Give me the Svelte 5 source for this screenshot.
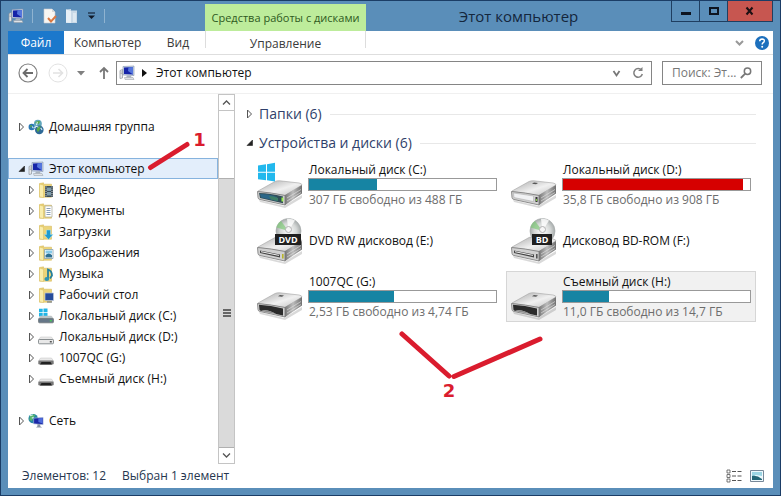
<script>
  const folders = [
    { name: 'Видео', kind: 'video' },
    { name: 'Документы', kind: 'docs' },
    { name: 'Загрузки', kind: 'down' },
    { name: 'Изображения', kind: 'pics' },
    { name: 'Музыка', kind: 'music' },
    { name: 'Рабочий стол', kind: 'desk' },
    { name: 'Локальный диск (C:)', kind: 'win' },
    { name: 'Локальный диск (D:)', kind: 'hdd' },
    { name: '1007QC (G:)', kind: 'usb' },
    { name: 'Съемный диск (H:)', kind: 'usb' }
  ];
  const drives = [
    { name: 'Локальный диск (C:)', kind: 'win', used: 36.6, info: '307 ГБ свободно из 488 ГБ' },
    { name: 'Локальный диск (D:)', kind: 'hdd', used: 96.2, full: true, info: '35,8 ГБ свободно из 908 ГБ' },
    { name: 'DVD RW дисковод (E:)', kind: 'dvd', badge: 'DVD' },
    { name: 'Дисковод BD-ROM (F:)', kind: 'bd', badge: 'BD' },
    { name: '1007QC (G:)', kind: 'usb', used: 45.5, info: '2,53 ГБ свободно из 4,74 ГБ' },
    { name: 'Съемный диск (H:)', kind: 'usb', used: 24.8, hover: true, info: '11,0 ГБ свободно из 14,7 ГБ' }
  ];
</script>

{#snippet computer()}
  <svg width="16" height="16" viewBox="0 0 16 16" aria-hidden="true">
    <path d="M1 5.5 3.5 4.5V13L1 13.5z" fill="#e8eaec" stroke="#8d949b" stroke-width=".7" />
    <path d="M1.6 7h1.2M1.6 8.6h1.2" stroke="#777" stroke-width=".6" />
    <path d="M4 1.5 15 1v9.5L4 10z" fill="#c9d4e6" stroke="#8090ad" stroke-width=".6" />
    <path d="M5 2.4 14 2v7.4L5 9z" fill="#1524a8" />
    <path d="M9.5 2.2 14 2v7.4L9 6z" fill="#5576dd" />
    <path d="M8 10.5h4l.5 2H7z" fill="#a9b3bf" />
    <path d="M5.5 12.5h8.5l1 2H6z" fill="#dfe3e7" stroke="#9299a1" stroke-width=".5" />
  </svg>
{/snippet}

{#snippet homegroup()}
  <svg width="16" height="16" viewBox="0 0 17 16" aria-hidden="true">
    <circle cx="4" cy="8" r="3.4" fill="#2a78b4" />
    <circle cx="10.5" cy="4.5" r="4.2" fill="#62a7bd" />
    <circle cx="12" cy="11" r="4.6" fill="#2f6a98" />
    <path d="M7.5 3.5Q10 .5 13 2.2L11 5zM9 10q2-3.5 4.500-2.500L12.500 11l-2 2.500zM2 6.500 4.500 6 3 9z" fill="#58aa45" />
    <path d="M10 2.500 9 6M13.500 9l1.500 2M4.500 7.500l1 1.500" stroke="#d5eff3" stroke-width="1.200" />
    <path d="M6 9q2-3 5-1" fill="none" stroke="#e9f4f5" stroke-width="1" />
  </svg>
{/snippet}

{#snippet network()}
  <svg width="16" height="16" viewBox="0 0 17 16" aria-hidden="true">
    <circle cx="5.500" cy="5.500" r="5" fill="#2686a5" />
    <path d="M2 3q3-3 6-1.500L6 4 4 8 1.500 7z" fill="#57b56b" />
    <path d="M2 2.500 5 1.500M4 5l2-1" stroke="#d2f0e9" stroke-width="1.200" />
    <path d="m6 5 10-.8v7.600L6 11z" fill="#1a27a7" stroke="#a6b5d8" stroke-width=".7" />
    <path d="m11 5 4.500-.3v6L11 9z" fill="#4e6cdc" />
    <path d="M10 11.500h3v2l2 1.500H8.500l1.500-1.500z" fill="#8993a5" />
  </svg>
{/snippet}

{#snippet smallIcon(kind)}
  <svg width="16" height="16" viewBox="0 0 16 16" aria-hidden="true">
    {#if kind === 'win' || kind === 'hdd' || kind === 'usb'}
      {#if kind === 'win'}
        <path d="M1 .800h3.700v3.400H1zM5.500.500h4v3.700h-4zM1 5h3.700v3.400H1zM5.500 5h4v3.700h-4z" fill="#20b4e6" />
      {/if}
      <path d="M2.500 8h11L15.500 11H.500z" fill={kind === 'win' ? '#b9c3c7' : '#e9e9e9'} stroke="#c0c0c0" stroke-width=".5" />
      {#if kind === 'usb'}
        <rect x=".3" y="10.500" width="15.400" height="4" rx="1.200" fill="#777" />
        <path d="M2 14.500 3.500 12h9l1.500 2.500z" fill="#222" />
      {:else}
        <rect x=".5" y="10.500" width="15" height="4.300" rx="1" fill={kind === 'win' ? '#678' : '#e8e8e8'} stroke="#70777a" stroke-width=".8" />
        <rect x="11.800" y="12" width="2" height="1.500" fill={kind === 'win' ? '#49c65a' : '#555'} />
      {/if}
    {:else}
      <path d="M1.500 1.500 5.500.800v1.400h8v13h-12z" fill="#ecd478" stroke="#d0b350" stroke-width=".5" />
      <path d="m1.500 2 4 1.200v12.500l-4-1z" fill="#f9edac" stroke="#d8bd62" stroke-width=".5" />
      {#if kind === 'video'}
        <path d="M7 4h8v11H7z" fill="#3c4c57" /><path d="M9 5.500h4v3.500H9zM9 10h4v3.500H9z" fill="#7d9cab" />
        <path d="M8 4.500v10M14 4.500v10" stroke="#e8e8e8" stroke-dasharray="1 1.200" />
      {:else if kind === 'docs'}
        <path d="M7 3h7v11H7z" fill="#fff" stroke="#a9a99a" stroke-width=".7" /><path d="M8.500 5.500h4M8.500 7.500h4M8.500 9.500h4M8.500 11.500h4" stroke="#8aa0bb" />
      {:else if kind === 'down'}
        <path d="M8.500 6h4v4.500H15L10.500 15.500 6 10.500h2.500z" fill="#1e9bd1" stroke="#aee1f2" stroke-width=".5" />
      {:else if kind === 'pics'}
        <path d="M6.500 4.500H15v9H6.500z" fill="#fff" stroke="#7797a8" stroke-width=".7" /><path d="M7.500 5.500H14v3H7.500z" fill="#85c9e8" /><path d="m7.500 12.500V10q3-3 6.500 0v2.500z" fill="#2c6e91" />
      {:else if kind === 'music'}
        <path d="M10 13V3.500q4 1.500 4 6l-2 3" fill="none" stroke="#247f9d" stroke-width="1.800" /><ellipse cx="8.800" cy="13" rx="2.400" ry="1.900" fill="#2e93b3" />
      {:else}
        <path d="M7 6h8.500v7.500H7z" fill="#274c9b" stroke="#b9c4d8" stroke-width=".7" /><path d="M9 15h5" stroke="#617090" />
      {/if}
    {/if}
  </svg>
{/snippet}

{#snippet bigIcon(kind, badge)}
  <svg class="big" width="48" height="48" viewBox="0 0 48 48" aria-hidden="true">
    <defs>
      <linearGradient id="top-{kind}" x1="0" y1="0" x2="1" y2="1">
        <stop offset="0" stop-color="#a9a9a9" /><stop offset=".55" stop-color="#f0f0f0" /><stop offset="1" stop-color="#c0c0c0" />
      </linearGradient>
      <linearGradient id="side-{kind}" x1="0" y1="0" x2="1" y2="0">
        <stop offset="0" stop-color="#707070" /><stop offset=".5" stop-color="#bcbcbc" /><stop offset="1" stop-color="#707070" />
      </linearGradient>
      <radialGradient id="disc-{kind}"><stop offset="0" stop-color="#fff" /><stop offset=".65" stop-color="#d4d7d6" /><stop offset="1" stop-color="#a6abab" /></radialGradient>
    </defs>
    <path d="M3 39 28 45 46 34v3L29 47 4 41z" fill="#000" opacity=".15" />
    <path d="M2 30 19 20.500Q21 19.500 24 19.800L43 22q3 .5 3 2L29 34.500 2 30.500z" fill="url(#top-{kind})" stroke="#a2a2a2" stroke-width=".6" />
    <path d="m29 34 17-10v8.500L30 43.500q-1 .8-2 .5z" fill="url(#side-{kind})" />
    <path d="M31 40 45 31.500M31 37 45 28.500" stroke="#e4e4e4" stroke-width=".6" />
    <path d="M1.500 30.500Q15 31.500 29 34.500V44L4 38.500q-2-.5-2-2z" fill="#d0d0d0" stroke="#777" stroke-width=".8" />
    {#if kind === 'usb'}
      <path d="M3 31.700Q15 32.500 27 35.500V42.500L20 41Q11 35.500 5 38L3.500 37z" fill="#2b2b2b" />
      <path d="M5 38Q13 36 20 41z" fill="#8b8b8b" /><path d="m24 22 4 .5-2 1.200-4-.5z" fill="#555" />
    {:else if kind === 'hdd'}
      <path d="m3.500 32 20 3v5.500L4 36.500z" fill="#f1f2f4" stroke="#999" stroke-width=".4" /><path d="M25.500 36h2v5h-2z" fill="#333" /><path d="M26 38h1v2h-1z" fill="#83d43a" /><path d="m24 21.500 4 .5-2 1.200-4-.5z" fill="#555" />
    {:else if kind === 'win'}
      <path d="M3 32Q14 32 27 35.500v6.800L4 37z" fill="#314e58" /><path d="M4 33q10 0 17 3v4L5 36.500z" fill="#2a6688" /><path d="M13 35q5 0 9 2v3l-7-1.500z" fill="#3e7f66" /><path d="M25.500 36.500h1.800v4h-1.800z" fill="#9af04b" />
    {:else}
      <path d="M4 33.500 24 37.500v3L4 36z" fill="#444" /><path d="m5 34.700 18 3.700" stroke="#eee" stroke-width="1" /><path d="M26 37h1.600v4.500H26z" fill={kind === 'dvd' ? '#b9b52a' : '#555'} />
    {/if}
    {#if kind === 'win'}
      <path d="m2 4.500 8-1.200v7.500H2zM11 3.200l8-1.400v9h-8zM2 11.800h8v7.400l-8-1zM11 11.800h8v8.800l-8-1.300z" fill="#22b8ed" />
    {:else if badge}
      <circle cx="32.500" cy="14" r="12.500" fill="url(#disc-{kind})" stroke="#a9adad" stroke-width=".7" />
      <path d="m32.500 14-12-3.500Q21.500 6 25 4z" fill="#80c979" opacity=".7" /><path d="M32.500 14 31 1.800q5-.5 8 1.800z" fill="#fff" opacity=".8" />
      <circle cx="32.500" cy="12.500" r="3" fill="#f6f6f6" stroke="#b2b2b2" />
      <rect x={kind === 'dvd' ? 19 : 22} y="17" width={kind === 'dvd' ? 26 : 20} height="11" fill="#202020" />
      <text x="32" y="26" text-anchor="middle" class="badge">{badge}</text>
    {/if}
  </svg>
{/snippet}

{#snippet twisty(open)}
  <svg class="twisty" width="8" height="10" viewBox="0 0 8 10" aria-hidden="true">
    {#if open}
      <path d="M6.500 2v5.500H1z" fill="#222" stroke="#222" stroke-width=".6" />
    {:else}
      <path d="M1.500 1 5.500 5l-4 4z" fill="#fff" stroke="#555" stroke-width="1" />
    {/if}
  </svg>
{/snippet}

<div class="window">
  <header class="title">
    <div class="quick">
      {@render computer()}
      <i class="sep"></i>
      <button class="props" aria-label="Свойства">
        <svg width="14" height="16" viewBox="0 0 14 16"><path d="M1 1h8l3 3v11H1z" fill="#f8f6f2" stroke="#c9cdd2" stroke-width=".6" /><path d="m9 1 3 3H9z" fill="#d6d6d6" /><path d="m5 10 3 3.500L13 8" fill="none" stroke="#d97842" stroke-width="2" /></svg>
      </button>
      <button aria-label="Новая папка">
        <svg width="14" height="16" viewBox="0 0 14 16"><path d="M1 1.500 6 1v1.500h6V15H1z" fill="#c9d9e7" /><path d="m1 1.500 5 1.500V15l-5-.5z" fill="#e7eff6" /><path d="M8 5h3v9H8z" fill="#dde8f1" /></svg>
      </button>
      <button aria-label="Настройка панели">
        <svg width="9" height="8" viewBox="0 0 9 8"><path d="M1 1h7" stroke="#14243a" stroke-width="1.200" /><path d="M1 3.500h7L4.500 7z" fill="#101a28" /></svg>
      </button>
      <i class="sep"></i>
    </div>
    <div class="context">Средства работы с дисками</div>
    <h1>Этот компьютер</h1>
    <div class="controls">
      <button aria-label="Свернуть"><svg width="10" height="10"><path d="M0 6h10v3H0z" fill="#0d1420" /></svg></button>
      <button aria-label="Развернуть"><svg width="10" height="10"><path d="M1 2h8v6H1z" fill="none" stroke="#0d1420" stroke-width="2" /></svg></button>
      <button class="close" aria-label="Закрыть"><svg width="10" height="10"><path d="m1.500 1.500 6 7M7.500 1.500l-6 7" stroke="#1c1013" stroke-width="2" /></svg></button>
    </div>
  </header>

  <nav class="tabs">
    <button class="file">Файл</button>
    <button class="comp">Компьютер</button>
    <button class="view">Вид</button>
    <button class="manage">Управление</button>
    <div class="help">
      <button aria-label="Развернуть ленту"><svg width="9" height="8" viewBox="0 0 9 8"><path d="m1 2 3.500 3.500L8 2" fill="none" stroke="#999" stroke-width="2" /></svg></button>
      <button aria-label="Справка"><svg width="14" height="14" viewBox="0 0 14 14"><circle cx="7" cy="7" r="7" fill="#1d70bd" /><path d="M4.700 5.300Q4.800 3 7.100 3 9.400 3.100 9.300 5 9.200 6.200 7.900 6.900 7.200 7.400 7.200 8.500" fill="none" stroke="#fff" stroke-width="1.500" /><circle cx="7.200" cy="10.700" r="1" fill="#fff" /></svg></button>
    </div>
  </nav>

  <div class="nav">
    <button aria-label="Назад"><svg width="20" height="20" viewBox="0 0 20 20"><circle cx="10" cy="10" r="9" fill="#fff" stroke="#808080" stroke-width="1.200" /><path d="M15 10H6M9.500 6 5.500 10l4 4" fill="none" stroke="#6c6c6c" stroke-width="1.800" /></svg></button>
    <button class="fwd" aria-label="Вперед"><svg width="20" height="20" viewBox="0 0 20 20"><circle cx="10" cy="10" r="9" fill="#fff" stroke="#e2e2e2" /><path d="M5 10h9M10.500 6l4 4-4 4" fill="none" stroke="#e2e2e2" stroke-width="1.600" /></svg></button>
    <button class="hist" aria-label="Журнал"><svg width="8" height="5"><path d="M0 0h8L4 4.500z" fill="#808080" /></svg></button>
    <button class="up" aria-label="Вверх"><svg width="12" height="14" viewBox="0 0 12 14"><path d="M6 13V2M2 6l4-4 4 4" fill="none" stroke="#777" stroke-width="1.800" /></svg></button>
    <div class="address">
      {@render computer()}
      <svg class="crumb-arrow" width="5" height="8"><path d="M0 0v8l5-4z" fill="#111" /></svg>
      <button class="crumb">Этот компьютер</button>
      <button aria-label="Предыдущие расположения"><svg width="9" height="9" viewBox="0 0 9 9"><path d="M1.500 2 4.500 6.500 7.500 2" fill="none" stroke="#777" stroke-width="1.800" /></svg></button>
      <button class="refresh" aria-label="Обновить"><svg width="12" height="12" viewBox="0 0 12 12"><path d="M9.500 3.200A4.300 4.300 0 1 0 10.300 7" fill="none" stroke="#808080" stroke-width="1.500" /><path d="M6 4h4.500V0z" fill="#808080" /></svg></button>
    </div>
    <label class="search">
      <input type="text" aria-label="Поиск" placeholder="Поиск: Эт..." />
      <svg width="12" height="12" viewBox="0 0 12 12"><circle cx="7.500" cy="4.300" r="3.200" fill="none" stroke="#777" stroke-width="1.500" /><path d="M5 6.800.800 11" stroke="#777" stroke-width="1.800" /></svg>
    </label>
  </div>

  <div class="body">
    <aside>
      <ul class="tree">
        <li><button class="row">{@render twisty(false)}{@render homegroup()}<span>Домашняя группа</span></button></li>
        <li class="group">
          <button class="row selected">{@render twisty(true)}{@render computer()}<span>Этот компьютер</span></button>
          <ul>
            {#each folders as f}
              <li><button class="row child">{@render twisty(false)}{@render smallIcon(f.kind)}<span>{f.name}</span></button></li>
            {/each}
          </ul>
        </li>
        <li class="group"><button class="row">{@render twisty(false)}{@render network()}<span>Сеть</span></button></li>
      </ul>
      <div class="scroll">
        <button aria-label="Прокрутить вверх"><svg width="9" height="7"><path d="m1 5.500 3.500-3.500L8 5.500" fill="none" stroke="#555" stroke-width="1.300" /></svg></button>
        <div class="track"></div>
        <div class="thumb"><i></i><i></i><i></i></div>
        <button aria-label="Прокрутить вниз"><svg width="9" height="7"><path d="m1 1.500 3.500 3.500L8 1.500" fill="none" stroke="#555" stroke-width="1.300" /></svg></button>
      </div>
    </aside>

    <main>
      <h2>{@render twisty(false)}<span>Папки (6)</span></h2>
      <h2>{@render twisty(true)}<span>Устройства и диски (6)</span></h2>
      <div class="drives">
        {#each drives as d}
          <button class="drive" class:hover={d.hover}>
            {@render bigIcon(d.kind, d.badge)}
            <span class="info">
              <span class="name">{d.name}</span>
              {#if d.info}
                <span class="bar"><span class="fill" class:full={d.full} style="width: {d.used}%"></span></span>
                <span class="free">{d.info}</span>
              {/if}
            </span>
          </button>
        {/each}
      </div>
    </main>
  </div>

  <footer>
    <span>Элементов: 12</span>
    <span>Выбран 1 элемент</span>
    <div class="modes">
      <button aria-label="Таблица"><svg width="16" height="14" viewBox="0 0 16 14"><path d="M1 1h3v3H1zM1 5.500h3v3H1zM1 10h3v3H1z" fill="#fff" stroke="#555" stroke-width=".8" /><path d="M6 2.500h4M11.500 2.500h4M6 7h4M11.500 7h4M6 11.500h4M11.500 11.500h4" stroke="#555" /></svg></button>
      <button aria-label="Крупные значки"><svg width="14" height="12" viewBox="0 0 14 12"><path d="M.5.500h13v11H.500z" fill="#eef9fd" stroke="#789" /><path d="M2 2h10v4l-6-1-4 2z" fill="#9bd5e4" /><path d="M2 6q5-1 10 3v1H2z" fill="#236677" /></svg></button>
    </div>
  </footer>

  <svg class="marks" width="781" height="496" viewBox="0 0 781 496">
    <g stroke="#da1c2e" stroke-width="5" stroke-linecap="round">
      <path d="M150.500 167.500 187 144.500M402 334l47 42M454 376.500 540 339" />
    </g>
    <text x="199.500" y="146" text-anchor="middle">1</text>
    <text x="449" y="397" text-anchor="middle">2</text>
  </svg>
</div>

<style>
  :global(body) { margin: 0; }
  .window {
    position: relative;
    box-sizing: border-box;
    display: flex;
    flex-direction: column;
    min-height: 100vh;
    padding: 0 7px 7px;
    border: 1px solid #1b3d66;
    background: #5a8eb9;
    font: 12px/16px "Open Sans", "Noto Sans", sans-serif;
    color: #111;
  }
  svg { display: block; flex: none; }
  ul { list-style: none; margin: 0; padding: 0; }
  button {
    display: flex;
    align-items: center;
    margin: 0;
    padding: 0;
    border: 0;
    background: none;
    font: inherit;
    color: inherit;
    text-align: left;
    white-space: nowrap;
  }

  .title { display: flex; height: 30px; }
  .quick { display: flex; align-items: center; width: 197px; gap: 8px; }
  .props { margin-left: 2px; }
  .sep { width: 1px; height: 14px; background: #8fb3d0; }
  .context {
    margin-top: 3px;
    width: 161px;
    background: #bdec9b;
    color: #2e5a1d;
    font-size: 11px;
    line-height: 28px;
    text-align: center;
    white-space: nowrap;
  }
  h1 { flex: 1; margin: 0; font-size: 15px; line-height: 30px; font-weight: 400; text-align: center; color: #14263c; }
  .controls { display: flex; align-items: flex-start; }
  .controls button {
    box-sizing: border-box;
    width: 28px;
    height: 21px;
    justify-content: center;
    border: solid #1f3e60;
    border-width: 0 0 1px 1px;
  }
  .controls .close { width: 46px; background: #c75650; border-right-width: 1px; }

  .tabs { display: flex; align-items: center; height: 23px; background: #fff; border-bottom: 1px solid #dedede; color: #3a3a3a; }
  .tabs button { height: 23px; }
  .tabs .file { width: 56px; justify-content: center; background: #1b78cc; color: #fff; }
  .tabs .comp { width: 87px; justify-content: center; }
  .tabs .view { width: 54px; justify-content: center; }
  .tabs .manage { box-sizing: border-box; width: 161px; height: 17px; align-self: flex-start; justify-content: center; border: solid #ddd; border-width: 0 1px; padding-top: 8px; }
  .help { display: flex; gap: 11px; margin-left: auto; padding-right: 4px; }

  .nav { display: flex; align-items: center; padding: 6px 11px 8px 10px; background: #fff; }
  .fwd { margin-left: 10px; }
  .hist { margin-left: 9px; }
  .up { margin-left: 13px; }
  .address, .search { box-sizing: border-box; display: flex; align-items: center; height: 24px; border: 1px solid #858585; background: #fff; }
  .address { flex: 1; margin-left: 6px; padding: 0 7px 0 2px; }
  .crumb-arrow { margin: 0 9px 0 7px; }
  .crumb { flex: 1; }
  .refresh { margin-left: 11px; }
  .search { width: 100px; margin-left: 10px; padding: 0 9px; }
  .search input { flex: 1; min-width: 0; padding: 0; border: 0; outline: 0; background: none; font: inherit; }
  .search input::placeholder { color: #777; opacity: 1; }

  .body { display: flex; flex: 1; background: #fff; border-top: 1px solid #f0f0f0; }
  aside { display: flex; width: 227px; }
  .tree { flex: 1; padding-top: 22px; }
  .group { margin-top: 21px; }
  .row { box-sizing: border-box; width: 100%; height: 21px; padding-left: 9px; border: 1px solid transparent; }
  .row .twisty { margin-right: 2px; }
  .row span { margin-left: 5px; }
  .child { padding-left: 19px; }
  .selected { background: #e3eefb; border-color: #86b3de; }
  .scroll { box-sizing: border-box; display: flex; flex-direction: column; width: 17px; border: 1px solid #c4c4c4; border-bottom: 0; }
  .scroll button { height: 16px; justify-content: center; border-bottom: 1px solid #c4c4c4; }
  .track { flex: 1; }
  .thumb { flex: 4; display: flex; flex-direction: column; align-items: center; justify-content: center; gap: 1px; background: #dadada; border: solid #b0b0b0; border-width: 1px 0; }
  .thumb i { width: 8px; height: 2px; background: #666; }

  main { flex: 1; padding: 10px 17px 0 11px; }
  h2 { display: flex; align-items: center; margin: 0 0 9px; font-size: 14px; line-height: 20px; font-weight: 400; color: #2f3f6b; }
  h2 span { margin-left: 5px; }
  h2::after { content: ""; flex: 1; height: 1px; margin-left: 8px; background: #e8e8e8; }
  .drives { display: grid; grid-template-columns: 1fr 1fr; gap: 5px 4px; margin: -3px 0 0 6px; }
  .drive { box-sizing: border-box; height: 51px; padding: 0 4px 0 3px; border: 1px solid transparent; gap: 4px; }
  .hover { background: #f1f1f1; border-color: #d6d6d6; }
  .info { display: flex; flex: 1; flex-direction: column; }
  .name, .free { line-height: 17px; padding-left: 1px; }
  .bar { height: 11px; border: 1px solid #999; background: #fff; }
  .fill { display: block; height: 100%; background: #1684a3; }
  .full { background: #d60000; }
  .free { color: #6d6d6d; }
  .badge { font: 700 9px "Open Sans", sans-serif; fill: #fff; }

  footer { display: flex; align-items: center; gap: 16px; height: 24px; padding: 0 9px 0 14px; background: #fff; color: #26364f; }
  .modes { display: flex; align-items: center; gap: 8px; margin-left: auto; }
  .marks { position: absolute; left: -1px; top: -1px; fill: #da1c2e; font: 700 18px "DejaVu Sans", sans-serif; pointer-events: none; }
  .marks path { fill: none; }
</style>
